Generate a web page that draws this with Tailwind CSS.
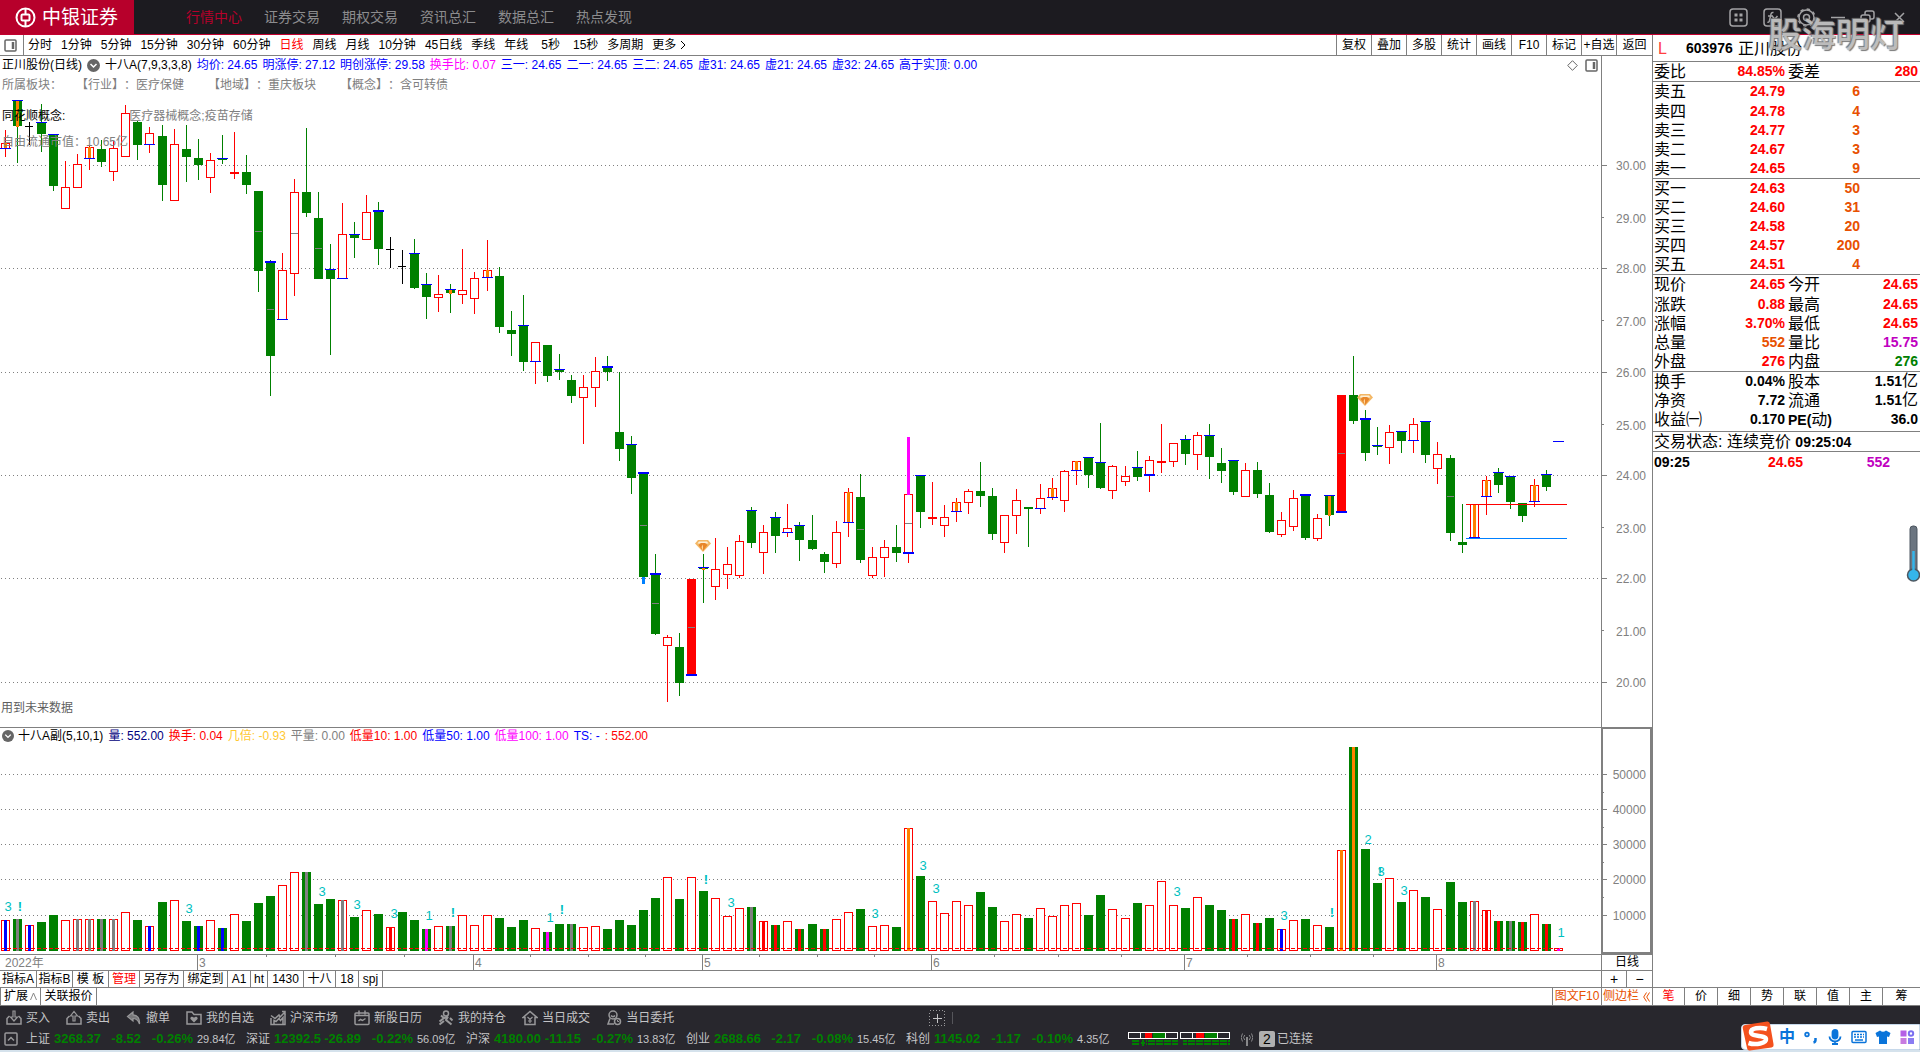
<!DOCTYPE html>
<html lang="zh-CN">
<head>
    <meta charset="UTF-8">
    <meta name="viewport" content="width=device-width, initial-scale=1.0">
    <title>正川股份 603976 - 中银证券</title>
    <script src="https://cdn.jsdelivr.net/npm/@tailwindcss/browser@4"></script>
</head>
<body class="h-screen overflow-hidden flex flex-col bg-white text-black text-xs font-['Liberation_Sans','Noto_Sans_CJK_SC',sans-serif]">
    <!-- Title bar -->
    <header class="relative h-[35px] shrink-0 flex bg-[#1c1b20] border-b border-[#c3002f]">
        <a href="#" class="w-[134px] flex items-center gap-[6px] pl-[15px] bg-[#b7002b] text-white">
            <svg class="w-[21px] h-[21px]" viewBox="0 0 21 21" fill="none" stroke="currentColor">
                <circle cx="10.5" cy="10.5" r="9" stroke-width="2"></circle>
                <rect x="6.5" y="7.5" width="8" height="6" rx="1" stroke-width="2"></rect>
                <path d="M10.5 1v6M10.5 14v6" stroke-width="2"></path>
            </svg>
            <span class="text-[19px] leading-none">中银证券</span>
        </a>
        <nav class="flex items-center gap-[22px] ml-[52px] text-sm text-[#8c8c8e]">
            <a href="#" class="text-[#b7002b]">行情中心</a>
            <a href="#">证券交易</a>
            <a href="#">期权交易</a>
            <a href="#">资讯总汇</a>
            <a href="#">数据总汇</a>
            <a href="#">热点发现</a>
        </nav>
        <div class="ml-auto flex items-center gap-[15px] pr-[11px] text-[#a3a3a5]">
            <button aria-label="应用">
                <svg class="w-[19px] h-[19px]" viewBox="0 0 19 19" fill="none" stroke="currentColor" stroke-width="1.5">
                    <rect x="1" y="1" width="17" height="17" rx="3"></rect>
                    <path d="M5.5 7h3M10.5 7h3M5.5 12h3M10.5 12h3" stroke-width="3"></path>
                </svg>
            </button>
            <button aria-label="公式">
                <svg class="w-[19px] h-[19px]" viewBox="0 0 19 19" fill="none" stroke="currentColor" stroke-width="1.5">
                    <rect x="1" y="1" width="17" height="17" rx="3"></rect>
                    <path d="M10.5 4.5c-2-.5-2.5 1-3 4l-1 4c-.3 1.5-1 2-2 1.5M5 8h5M9.5 8.5l4.5 5M14.5 8l-5 6"></path>
                </svg>
            </button>
            <button aria-label="设置">
                <svg class="w-[19px] h-[19px]" viewBox="0 0 19 19" fill="none" stroke="currentColor" stroke-width="1.5">
                    <circle cx="9.5" cy="9.5" r="7.5"></circle>
                    <circle cx="9.5" cy="9.5" r="8.5" stroke-dasharray="3.3 3.37"></circle>
                    <circle cx="9.5" cy="9.5" r="3"></circle>
                </svg>
            </button>
            <button aria-label="最小化">
                <svg class="w-[14px] h-[19px]" viewBox="0 0 14 19" fill="none" stroke="currentColor" stroke-width="1.5"><path d="M0 9.5h14"></path></svg>
            </button>
            <button aria-label="还原">
                <svg class="w-[15px] h-[19px]" viewBox="0 0 15 19" fill="none" stroke="currentColor" stroke-width="1.5">
                    <rect x="1" y="7" width="9" height="7" rx="2"></rect>
                    <path d="M5 7V5a2 2 0 0 1 2-2h5a2 2 0 0 1 2 2v4a2 2 0 0 1-2 2h-2"></path>
                </svg>
            </button>
            <button aria-label="关闭">
                <svg class="w-[19px] h-[19px]" viewBox="0 0 19 19" fill="none" stroke="currentColor" stroke-width="1.5"><path d="M5 5l9 9M14 5l-9 9"></path></svg>
            </button>
        </div>
        <p class="absolute right-[16px] top-[12px] z-10 text-[34px] leading-[46px] font-medium text-white/50 [text-shadow:1px_1px_1px_#777,-1px_-1px_1px_#777] pointer-events-none">股海明灯</p>
    </header>

    <main class="flex-1 min-h-0 flex">
        <section class="flex-1 min-w-0 flex flex-col">
            <!-- Period toolbar -->
            <div class="h-[21px] shrink-0 flex items-stretch border-b border-[#808080]">
                <button aria-label="侧栏" class="w-6 pl-1 flex items-center border-r border-[#808080]">
                    <svg class="w-[13px] h-[13px]" viewBox="0 0 13 13" fill="none" stroke="#666"><rect x="1" y="1" width="11" height="11" rx="1" stroke-width="1.5"></rect><path d="M9 3v7" stroke-width="2.5"></path></svg>
                </button>
                <div class="flex items-center gap-[9px] pl-1 whitespace-nowrap">
                    <button>分时</button>
                    <button>1分钟</button>
                    <button>5分钟</button>
                    <button>15分钟</button>
                    <button>30分钟</button>
                    <button>60分钟</button>
                    <button class="text-[#ff0000]">日线</button>
                    <button>周线</button>
                    <button>月线</button>
                    <button>10分钟</button>
                    <button>45日线</button>
                    <button>季线</button>
                    <button>年线</button>
                    <button class="px-1">5秒</button>
                    <button>15秒</button>
                    <button>多周期</button>
                    <button class="flex items-center gap-1">更多
                        <svg class="w-[6px] h-[10px]" viewBox="0 0 6 10" fill="none" stroke="currentColor"><path d="M1 1l4 4-4 4"></path></svg>
                    </button>
                </div>
                <div class="ml-auto flex whitespace-nowrap">
                    <button class="w-[35px] border-l border-[#808080]">复权</button>
                    <button class="w-[35px] border-l border-[#808080]">叠加</button>
                    <button class="w-[35px] border-l border-[#808080]">多股</button>
                    <button class="w-[35px] border-l border-[#808080]">统计</button>
                    <button class="w-[35px] border-l border-[#808080]">画线</button>
                    <button class="w-[35px] border-l border-[#808080]">F10</button>
                    <button class="w-[35px] border-l border-[#808080]">标记</button>
                    <button class="w-[35px] border-l border-[#808080]">+自选</button>
                    <button class="w-9 border-l border-[#808080]">返回</button>
                </div>
            </div>

            <!-- Price chart -->
            <div class="flex-1 min-h-0 flex">
                <div class="relative flex-1 min-w-0 overflow-hidden [text-spacing-trim:space-all]">
                    <svg id="priceChart" class="absolute inset-0 w-full h-full" shape-rendering="crispEdges"></svg>
                    <div class="absolute left-[2px] right-0 top-0 h-[18px] flex items-center gap-[5px] whitespace-nowrap text-[#0000ff]">
                        <span class="text-black">正川股份(日线)</span>
                        <svg class="w-[13px] h-[13px]" viewBox="0 0 13 13"><circle cx="6.5" cy="6.5" r="6.5" fill="#666"></circle><path d="M3.5 5l3 3 3-3" fill="none" stroke="#fff" stroke-width="1.5"></path></svg>
                        <span class="text-black">十八A(7,9,3,3,8)</span>
                        <span>均价: 24.65</span>
                        <span>明涨停: 27.12</span>
                        <span>明创涨停: 29.58</span>
                        <span class="text-[#ff00ff]">换手比: 0.07</span>
                        <span>三一: 24.65</span>
                        <span>二一: 24.65</span>
                        <span>三二: 24.65</span>
                        <span>虚31: 24.65</span>
                        <span>虚21: 24.65</span>
                        <span>虚32: 24.65</span>
                        <span>高于实顶: 0.00</span>
                        <svg class="w-[11px] h-[11px] ml-auto" viewBox="0 0 11 11" fill="none" stroke="#666"><path d="M5.5 .7l4.8 4.8-4.8 4.8L.7 5.5z"></path></svg>
                        <svg class="w-[13px] h-[13px] ml-[2px] mr-[3px]" viewBox="0 0 13 13" fill="none" stroke="#666"><rect x="1" y="1" width="11" height="11" rx="1" stroke-width="1.5"></rect><path d="M9 3v7" stroke-width="2.5"></path></svg>
                    </div>
                    <div class="absolute left-[2px] top-[20px] h-[18px] flex items-center gap-6 whitespace-nowrap text-[#808080]">
                        <span class="-mr-[10px]">所属板块：</span>
                        <span>【行业】：医疗保健</span>
                        <span>【地域】：重庆板块</span>
                        <span>【概念】：含可转债</span>
                    </div>
                    <div class="absolute left-[2px] top-[51px] h-[18px] flex items-center gap-16 whitespace-nowrap">
                        <span>同花顺概念:</span>
                        <span class="text-[#808080]">医疗器械概念;疫苗存储</span>
                    </div>
                    <p class="absolute left-[2px] top-[77px] leading-[18px] text-[#808080]">自由流通市值：10.65亿</p>
                    <p class="absolute left-px bottom-[10px] leading-[18px] text-[#606060]">用到未来数据</p>
                </div>
                <svg id="priceAxis" class="w-[51px] h-full shrink-0 border-l border-[#808080]" shape-rendering="crispEdges"></svg>
            </div>

            <!-- Volume chart -->
            <div class="h-[227px] shrink-0 flex">
                <div class="relative flex-1 min-w-0 overflow-hidden border-t border-[#808080]">
                    <svg id="volumeChart" class="absolute inset-0 w-full h-full" shape-rendering="crispEdges"></svg>
                    <div class="absolute left-[2px] top-0 h-[16px] flex items-center gap-[5px] whitespace-nowrap">
                        <svg class="w-3 h-3 -mr-px" viewBox="0 0 13 13"><circle cx="6.5" cy="6.5" r="6.5" fill="#666"></circle><path d="M3.5 5l3 3 3-3" fill="none" stroke="#fff" stroke-width="1.5"></path></svg>
                        <span>十八A副(5,10,1)</span>
                        <span class="text-[#000080]">量: 552.00</span>
                        <span class="text-[#ff0000]">换手: 0.04</span>
                        <span class="text-[#ffc832]">几倍: -0.93</span>
                        <span class="text-[#808080]">平量: 0.00</span>
                        <span class="text-[#ff0000]">低量10: 1.00</span>
                        <span class="text-[#0000ff]">低量50: 1.00</span>
                        <span class="text-[#ff00ff]">低量100: 1.00</span>
                        <span class="text-[#0000ff]">TS: -</span>
                        <span class="text-[#ff0000]">: 552.00</span>
                    </div>
                </div>
                <svg id="volumeAxis" class="w-[51px] h-full shrink-0 border-2 border-[#808080]" shape-rendering="crispEdges"></svg>
            </div>

            <!-- Date axis -->
            <div class="h-4 shrink-0 flex border-t border-[#808080]">
                <svg id="dateAxis" class="flex-1 min-w-0 h-full" shape-rendering="crispEdges"></svg>
                <button class="w-[51px] leading-[15px] border-l border-[#808080]">日线</button>
            </div>

            <div class="h-[17px] shrink-0 flex border-t border-[#808080] leading-4 whitespace-nowrap">
                <button class="w-[37px] border-r border-[#808080]">指标A</button>
                <button class="w-9 border-r border-[#808080]">指标B</button>
                <button class="w-9 border-r border-[#808080]">模 板</button>
                <button class="w-[31px] border-r border-[#808080] text-[#ff0000]">管理</button>
                <button class="w-11 border-r border-[#808080]">另存为</button>
                <button class="w-11 border-r border-[#808080]">绑定到</button>
                <button class="w-[23px] border-r border-[#808080]">A1</button>
                <button class="w-[17px] border-r border-[#808080]">ht</button>
                <button class="w-9 border-r border-[#808080]">1430</button>
                <button class="w-8 border-r border-[#808080]">十八</button>
                <button class="w-[23px] border-r border-[#808080]">18</button>
                <button class="w-6 border-r border-[#808080]">spj</button>
                <button class="w-[26px] ml-auto border-x border-[#808080] text-sm leading-4">+</button>
                <button class="w-[25px] text-sm leading-4">−</button>
            </div>
            <div class="h-[18px] shrink-0 flex border-t border-[#808080] leading-[17px] whitespace-nowrap">
                <button class="w-[41px] flex items-center justify-center gap-[2px] border-x border-[#808080]">扩展
                    <svg class="w-[7px] h-[9px]" viewBox="0 0 7 9" fill="none" stroke="#888"><path d="M.5 8l3-7 3 7"></path></svg>
                </button>
                <button class="w-14 border-r border-[#808080]">关联报价</button>
                <button class="w-[49px] ml-auto border-l border-[#808080] text-[#e85000]">图文F10</button>
                <button class="w-[51px] flex items-center gap-1 pl-px border-l border-[#808080] text-[#e85000]">侧边栏
                    <svg class="w-[7px] h-[10px]" viewBox="0 0 7 10" fill="none" stroke="currentColor"><path d="M3.5 .5L.7 5l2.8 4.5M6.5 .5L3.7 5l2.8 4.5"></path></svg>
                </button>
            </div>
        </section>

        <!-- Quote panel -->
        <aside class="relative w-[268px] shrink-0 flex flex-col border-l border-[#808080] text-base leading-[19px] whitespace-nowrap">
            <div class="h-[27px] shrink-0 flex items-center border-b border-[#808080]">
                <span class="w-[33px] pl-[5px] text-[#ff4040]">L</span>
                <b class="w-[52px] text-sm">603976</b>
                <span>正川股份</span>
            </div>
            <table class="w-full table-fixed">
                <tbody class="border-b border-[#808080]">
                    <tr class="h-[19px]">
                        <th scope="row" class="w-[50px] pl-px text-left font-normal">委比</th>
                        <td class="w-[82px] text-right text-sm leading-[19px] font-bold text-[#ff0000]">84.85%</td>
                        <th scope="row" class="w-[75px] pl-[3px] text-left font-normal">委差</th>
                        <td class="pr-[2px] text-right text-sm leading-[19px] font-bold text-[#ff0000]">280</td>
                    </tr>
                </tbody>
                <tbody id="asks" class="border-b border-[#808080]"></tbody>
                <tbody id="bids" class="border-b border-[#808080]"></tbody>
                <tbody id="quote" class="border-b border-[#808080]"></tbody>
                <tbody id="basics"></tbody>
            </table>
            <p class="h-[21px] shrink-0 mt-[2px] pl-px border-y border-[#808080]">交易状态: 连续竞价 <b class="text-sm leading-[19px]">09:25:04</b></p>
            <table class="w-full table-fixed text-sm leading-5 font-bold">
                <tbody>
                    <tr>
                        <td class="w-[50px] pl-px">09:25</td>
                        <td class="w-[100px] text-right text-[#ff0000]">24.65</td>
                        <td class="w-[87px] text-right text-[#c000c0]">552</td>
                        <td></td>
                    </tr>
                </tbody>
            </table>
            <svg class="absolute right-0 top-[490px] w-[14px] h-[58px]" viewBox="0 0 14 58">
                <rect x="4" y="1" width="7" height="50" rx="3" fill="#6b7580" stroke="#4c5660"></rect>
                <circle cx="7.5" cy="50" r="6" fill="#35b5ea" stroke="#4c5660" stroke-width="1.5"></circle>
                <path d="M7.5 26v22" stroke="#35b5ea" stroke-width="2.5"></path>
            </svg>
            <div class="mt-auto h-[18px] shrink-0 flex border-t border-[#808080] text-xs leading-[17px]">
                <button class="w-8 border-r border-[#808080] text-[#ff0000]">笔</button>
                <button class="w-[33px] border-r border-[#808080]">价</button>
                <button class="w-[33px] border-r border-[#808080]">细</button>
                <button class="w-[33px] border-r border-[#808080]">势</button>
                <button class="w-[33px] border-r border-[#808080]">联</button>
                <button class="w-[33px] border-r border-[#808080]">值</button>
                <button class="w-[33px] border-r border-[#808080]">主</button>
                <button class="flex-1">筹</button>
            </div>
        </aside>
    </main>

    <!-- Status bar -->
    <footer class="relative h-[47px] shrink-0 bg-[#28272d] border-t border-t-[#808080] border-b-2 border-b-[#d5e2ec] whitespace-nowrap text-[#c4c4c6]">
        <div class="h-[23px] flex items-center gap-4 pl-[6px]">
            <button class="flex items-center gap-1">
                <svg class="w-4 h-4" viewBox="0 0 16 16" fill="none" stroke="#98989a" stroke-width="1.5"><path d="M3.5 6L1 8.5V14h14V8.5L12.5 6"></path><path d="M7 1h2v6h2.5L8 11 4.5 7H7z" stroke-width="1.2"></path></svg>买入
            </button>
            <button class="flex items-center gap-1">
                <svg class="w-4 h-4" viewBox="0 0 16 16" fill="none" stroke="#98989a" stroke-width="1.5"><path d="M3.5 6L1 8.5V14h14V8.5L12.5 6"></path><path d="M7 11V6H4.5L8 1.5 11.5 6H9v5z" stroke-width="1.2"></path></svg>卖出
            </button>
            <button class="flex items-center gap-1">
                <svg class="w-4 h-4" viewBox="0 0 16 16" fill="#77777a" stroke="#98989a" stroke-width="1.2"><path d="M7 2L1.5 6.5 7 11V8.5c3 0 5 1.500 6.500 5.500C14 8.500 11.500 5 7 4.800z"></path></svg>撤单
            </button>
            <button class="flex items-center gap-1">
                <svg class="w-4 h-4" viewBox="0 0 16 16" fill="none" stroke="#98989a" stroke-width="1.5"><path d="M1 14V2h5l2 2.5h7V14z"></path><path d="M8 12.500L4.500 9c-.8-2 1.800-3.500 3.500-1.200 1.700-2.300 4.300-.8 3.500 1.200z" fill="#98989a" stroke="none"></path></svg>我的自选
            </button>
            <button class="flex items-center gap-1">
                <svg class="w-4 h-4" viewBox="0 0 16 16" fill="none" stroke="#98989a" stroke-width="1.5"><path d="M1 8v6.5h14V4"></path><path d="M1 5.500l4 3L9 5l1 2 5-5M12 1.500h3v3M4 14V10.500l2 1 3-3 1.500 2L13 7.500V14"></path></svg>沪深市场
            </button>
            <button class="flex items-center gap-1">
                <svg class="w-4 h-4" viewBox="0 0 16 16" fill="none" stroke="#98989a" stroke-width="1.5"><rect x="1" y="3" width="14" height="11.5" rx="1"></rect><path d="M5 .5v4M11 .5v4M1 5.500h14M4.500 11l2-1.500 2 1 3-2"></path></svg>新股日历
            </button>
            <button class="flex items-center gap-1">
                <svg class="w-4 h-4" viewBox="0 0 16 16" fill="none" stroke="#98989a" stroke-width="2"><circle cx="8" cy="3.5" r="2.5" stroke-width="1.5"></circle><path d="M3 5.500L6 8l4-1.500M6 8l-4.500 3.500M10 6.500L8 10l5.500 4.500M1.500 14.500L6 11M12 8l2.500 2.500"></path></svg>我的持仓
            </button>
            <button class="flex items-center gap-1">
                <svg class="w-4 h-4" viewBox="0 0 16 16" fill="none" stroke="#98989a" stroke-width="1.5"><path d="M1 7.500L8 1.500l7 6H13V14.500H3V7.500z"></path><path d="M5.500 7L8 9.500 10.500 7M8 9.500V13M6 11h4" stroke-width="1.2"></path></svg>当日成交
            </button>
            <button class="flex items-center gap-1">
                <svg class="w-4 h-4" viewBox="0 0 16 16" fill="none" stroke="#98989a" stroke-width="1.5"><circle cx="7" cy="5" r="4"></circle><path d="M5 5.500c1 1.500 3 1.500 4 0M4 8.500L2 14h6"></path><circle cx="11.5" cy="11.5" r="3"></circle><path d="M11.500 10v1.500h1.500" stroke-width="1"></path></svg>当日委托
            </button>
            <button aria-label="添加" class="ml-[239px]">
                <svg class="w-[26px] h-4" viewBox="0 0 26 16" fill="none" stroke="#98989a" shape-rendering="crispEdges"><rect x=".5" y=".5" width="15" height="15" stroke-dasharray="1 2"></rect><path d="M8.500 4v9M4 8.500h9" stroke="#c4c4c6"></path><path d="M23.500 2v12" stroke="#55555a"></path></svg>
            </button>
        </div>
        <div class="h-[19px] flex items-center pl-1">
            <button aria-label="展开" class="w-[22px]">
                <svg class="w-[14px] h-[14px]" viewBox="0 0 14 14" fill="none" stroke="#98989a" stroke-width="1.5"><rect x="1" y="1" width="12" height="12" rx="1"></rect><path d="M4 8.500l3-3 3 3"></path></svg>
            </button>
            <div id="indices" class="flex"></div>
            <svg class="w-[103px] h-[14px] ml-[2px]" viewBox="0 0 103 14" shape-rendering="crispEdges">
                <path d="M.5.5h49v6H.5zM12.500.5v6M37.500.5v6M52.500.5h49v6h-49zM64.500.5v6M89.500.5v6" fill="none" stroke="#fff"></path>
                <path d="M17 1h7v5h-7zM68 1h8v5h-8z" fill="#ff0000"></path>
                <path d="M25 1h12v5H25zM77 1h12v5H77z" fill="#008000"></path>
                <path d="M4 9h98M4 12h98" stroke="#008000" stroke-width="2" stroke-dasharray="7 1"></path>
                <path d="M11 7h7v7h-7zM50 7h5v7h-5z" fill="#28272d"></path>
                <path d="M14.500 8v6M12.500 11h4" stroke="#008000" stroke-width="2"></path>
            </svg>
            <svg class="w-3 h-4 ml-[10px]" viewBox="0 0 12 16" fill="none" stroke="#88888a"><path d="M6 6v9" stroke-width="2"></path><path d="M3.800 4a3.500 3.500 0 0 0 0 5M8.200 4a3.500 3.500 0 0 1 0 5M1.500 2.500a7 7 0 0 0 0 8M10.500 2.500a7 7 0 0 1 0 8"></path></svg>
            <span class="w-4 h-4 ml-[6px] rounded-xs bg-[#b0b0b0] text-black text-sm leading-4 text-center">2</span>
            <span class="ml-[2px]">已连接</span>
        </div>
        <!-- Input method bar -->
        <div class="absolute right-0 bottom-0 h-[26px] flex items-center gap-[8px] pl-[38px] pr-1 rounded-l bg-white border border-[#c6d8ea] text-[#0a74da]">
            <svg class="absolute left-0 -top-[4px] w-8 h-[30px]" viewBox="0 0 32 30">
                <path d="M3 4L25 .5Q27.500 0 28 3l3.500 20q.5 3-2 3.500L8 29.500Q5.500 30 5 27L.8 7.500Q.3 4.500 3 4z" fill="#f4511e"></path>
                <path d="M25 8C18 6 8.500 7 9 11.500S23.500 14 24 18 14 24.500 6.500 22" fill="none" stroke="#fff" stroke-width="4.500"></path>
            </svg>
            <b class="-ml-px w-4 text-base leading-none">中</b>
            <svg class="w-4 h-4" viewBox="0 0 16 16" fill="none" stroke="currentColor"><circle cx="4" cy="5.500" r="1.800" stroke-width="1.800"></circle><path d="M12.500 9v2q0 2-2 2.500" stroke-width="2.500"></path></svg>
            <svg class="w-4 h-4" viewBox="0 0 16 16" fill="none" stroke="currentColor" stroke-width="1.800"><rect x="5.500" y="1" width="5" height="8.500" rx="2.500" fill="currentColor"></rect><path d="M2.500 7.500a5.500 5 0 0 0 11 0M8 12.500V15M5 15h6"></path></svg>
            <svg class="w-4 h-4" viewBox="0 0 16 16" fill="none" stroke="currentColor" stroke-width="1.500"><rect x="1" y="2.500" width="14" height="11" rx="1"></rect><path d="M3 5.500h10M3 8h10" stroke-dasharray="2 1"></path><path d="M4 11h8"></path></svg>
            <svg class="w-4 h-4" viewBox="0 0 16 16" fill="currentColor"><path d="M5 1.500q3 2.500 6 0l4.500 2.500-1.500 4-2-.5V15H4V7.500L2 8 .5 4z"></path></svg>
            <svg class="w-4 h-4" viewBox="0 0 16 16" fill="none" stroke-width="2"><rect x="2.500" y="2.500" width="4" height="4" fill="#b55fe6" stroke="#b55fe6"></rect><circle cx="12" cy="4.500" r="2.200" stroke="#7a6ff0"></circle><rect x="2.500" y="10" width="4" height="4" fill="#c77be0" stroke="#c77be0"></rect><rect x="10" y="10" width="4" height="4" fill="#8a7cf2" stroke="#8a7cf2"></rect></svg>
        </div>
    </footer>

    <script>
        // [kind, high, top, bottom, low, marks, mid]
        // kind: r hollow, R solid, g falling, k cross; marks: t/T top line, b/B bottom line, o core
        const candles = [
            ['r',130,143,149,157,'bo'], ['g',100,100,126,163,'to'], ['k',122,126,127,145], ['g',104,122,134,152,'t'],
            ['g',134,134,186,191,'t'], ['r',161,187,209,209], ['r',154,164,188,188], ['r',145,147,159,170,'bo'],
            ['g',140,149,162,167], ['r',141,148,172,181], ['r',105,113,157,157], ['g',121,122,145,160],
            ['r',127,133,145,153,'b'], ['g',125,136,185,201], ['r',129,144,201,201], ['g',125,149,157,182],
            ['g',139,158,165,180], ['r',153,160,178,193], ['g',135,158,160,164,'t'], ['r',132,172,174,179],
            ['g',155,172,185,194], ['g',191,191,271,292,'',231], ['g',260,261,356,396,'T',309], ['r',253,270,320,320,'b'],
            ['r',179,192,274,296,'',233], ['g',128,192,213,217], ['g',192,218,279,279,'',248], ['g',244,269,279,355,'t'],
            ['r',203,234,279,279,'b'], ['g',222,234,238,258,'t'], ['r',195,212,240,240], ['g',202,210,249,265,'T'],
            ['k',237,249,250,268], ['k',250,266,267,284], ['g',239,253,288,289,'t'], ['g',273,284,297,319,'t'],
            ['r',275,294,298,312], ['g',284,289,293,313,'to'], ['r',249,290,295,304], ['r',272,278,299,314],
            ['r',240,270,278,291,'bo'], ['g',267,276,327,333], ['g',311,330,334,356], ['g',295,325,362,371,'t'],
            ['r',342,342,362,384,'b'], ['g',345,345,376,382], ['g',354,369,372,380,'t'], ['g',375,380,396,403],
            ['r',375,387,398,444], ['r',357,371,388,407], ['g',356,366,372,381,'T'], ['g',372,432,449,461],
            ['g',436,444,478,494,'t'], ['g',472,472,577,577,'T',525], ['g',554,573,634,635,'T',603], ['r',635,637,646,702],
            ['g',633,647,683,696], ['R',579,579,676,676,'B',627], ['g',554,567,569,603,'to'], ['r',538,569,587,600],
            ['r',547,564,575,589], ['r',535,541,576,578], ['g',507,510,543,548,'t'], ['r',525,532,553,574],
            ['g',512,517,536,553,'t'], ['r',504,528,533,537,'b'], ['g',522,525,540,561,'t'], ['g',515,540,549,550],
            ['g',552,554,562,573], ['r',521,532,564,568], ['r',488,492,523,537,'bo'], ['g',474,497,560,563,'',529],
            ['r',547,557,576,578], ['r',540,547,558,577], ['g',525,547,553,562], ['r',494,494,554,563,'B',523],
            ['g',475,475,512,528,'t'], ['r',482,517,519,525], ['r',505,517,526,537], ['r',498,502,512,522,'bo'],
            ['r',489,491,503,514], ['g',462,491,496,507], ['g',488,496,534,540], ['r',515,515,543,553],
            ['r',489,500,516,534], ['g',507,507,509,547], ['r',484,498,509,514,'b'], ['r',478,488,498,500,'bo'],
            ['r',470,471,501,512], ['r',461,461,471,485,'bo'], ['g',457,457,475,488,'t'], ['g',423,462,488,489,'t'],
            ['r',465,466,491,499], ['r',466,476,482,486], ['g',451,467,477,481,'t'], ['r',456,460,476,492,'B'],
            ['r',424,461,463,473], ['r',443,443,462,467], ['g',435,439,454,465,'t'], ['r',432,435,455,470],
            ['g',424,435,457,479,'t'], ['g',448,463,471,483], ['g',460,460,492,495,'t'], ['r',463,470,497,497],
            ['g',462,470,494,498], ['g',483,495,532,533], ['r',512,520,535,537], ['r',490,498,527,531],
            ['g',494,494,538,540,'T'], ['r',514,518,539,541], ['g',495,495,515,526,'to'], ['R',395,395,513,513,'B',453],
            ['g',356,395,421,424], ['g',410,418,453,461,'T'], ['g',427,445,447,455,'t'], ['r',425,432,448,464],
            ['g',431,431,441,453,'t'], ['r',418,424,441,453,'b'], ['g',421,421,455,463,'t'], ['r',442,454,469,484],
            ['g',455,458,533,541,'',496], ['g',504,542,545,553], ['r',504,504,538,538,'bo'], ['r',476,480,497,515,'bo'],
            ['g',468,472,485,493,'t'], ['g',476,476,502,509,'t'], ['g',503,503,516,522], ['r',479,485,502,507,'bo'],
            ['g',470,474,487,491,'t']
        ];

        // kind + top of bar + core colour (b blue, y gray, r red, m magenta, o orange)
        const volumes = (
            'r920b g919y r925b g922 g915 r920 r919y r919y g919y r919y r912 g920 r926b g902 r900 g921 g926b r920 g928b r914 ' +
            'g921 g903 g896 r885 r872 g872y g904 g899 r900y g917 r910 g914 r927r g912 g920 g929m r926 g926y r915 r925 ' +
            'r915 g918 g927 g920 r928 g932m g924 g924y r927 r926 g929 g920 g925 g910 g898 r877 g899 r877 g891 r898 ' +
            'r916 r908 g907y r921r g925r r921 g929r g924 g929r r919 r912 g909 r926 r925 g927 r828o g876 r901 r913 r901 ' +
            'r905 g892 g907 r921 r914 g918 r908 r916 r905 r903 g915 g895 r909 r918 g903 r905 r881 r905 g908 r897 ' +
            'g905 g910 g919r r914 g923r g918 r929b r920 g919 r925 g927 r850o g747o g849 g883 r878 g902 r890 g897 r909 ' +
            'g882 g902 r901y r910r g921r g921y g922r r914 g924r r948m'
        ).split(' ');

        const volumeTags = [
            ['3',8,907], ['!',20,907], ['3',189,909], ['3',322,892], ['3',357,905], ['3',394,914], ['1',429,916],
            ['!',453,913], ['1',550,918], ['!',562,910], ['!',706,880], ['3',731,903], ['3',875,914], ['3',923,866],
            ['3',936,889], ['3',1177,892], ['3',1284,916], ['!',1332,913], ['2',1368,840], ['3',1381,872],
            ['!',1380,872], ['3',1404,891], ['1',1561,933]
        ];

        const RED = '#ff0000', GREEN = '#008000', GRAY = '#808080', BLUE = '#0000ff', ORANGE = '#ff8000';
        const CORE = { b: BLUE, y: GRAY, r: RED, m: '#ff00ff', o: ORANGE };
        const PRICE_TOP = 56, VOLUME_TOP = 728, VOLUME_BASE = 951;

        const barX = i => Math.round(5.02 + i * 12.0375);
        const rect = (x, y, w, h, fill) => `<rect x="${x}" y="${y}" width="${w}" height="${h}" fill="${fill}"/>`;
        const box = (x, y, w, h) => rect(x, y, w, h, RED) + (h > 2 ? rect(x + 1, y + 1, w - 2, h - 2, '#fff') : '');
        const grid = y => `<line x1="1" x2="100%" y1="${y + 0.5}" y2="${y + 0.5}" stroke="${GRAY}" stroke-dasharray="1 3"/>`;
        const text = (s, x, y, fill, size, anchor, weight = 400) =>
            `<text x="${x}" y="${y}" fill="${fill}" font-size="${size}" font-weight="${weight}" text-anchor="${anchor}">${s}</text>`;
        const shift = (top, body) => `<g transform="translate(0 ${-top})">${body}</g>`;

        function candle([kind, high, top, bottom, low, marks = '', mid], i) {
            const x = barX(i);
            const color = kind === 'g' ? GREEN : kind === 'k' ? '#000' : RED;
            let s = rect(x, high, 1, low - high, color);
            s += kind === 'r' ? box(x - 4, top, 9, bottom - top) : rect(x - 4, top, kind === 'k' ? 8 : 9, bottom - top, color);
            if (marks.includes('o')) s += rect(x - 1, kind === 'g' ? top + 1 : top, 3, bottom - top, ORANGE);
            if (mid) s += rect(x - 3, mid, 7, 1, GRAY);
            if (marks.includes('t')) s += rect(x - 5, top, 11, 1, BLUE);
            if (marks.includes('T')) s += rect(x - 5, top, 11, 2, BLUE);
            if (marks.includes('b')) s += rect(x - 5, bottom - 1, 11, 1, BLUE);
            if (marks.includes('B')) s += rect(x - 5, bottom - 2, 11, 2, BLUE);
            return s;
        }

        const gem = (x, y) => `<g transform="translate(${x} ${y})" shape-rendering="auto">
            <path d="M3 0h10l3 3.500L8 12 0 3.500z" fill="#f3b765"/>
            <path d="M4 1.500h8l1.500 2h-11z" fill="#fdf0d8"/>
            <path d="M3.500 5L6 3h4l2.500 2L8 11z" fill="#e8862a"/>
            <path d="M8 4.500L6.500 7 8 11z" fill="#ffd79a"/></g>`;

        let price = [165, 268, 372, 475, 578, 682].map(grid).join('');
        price += candles.map(candle).join('');
        price += rect(barX(53) - 1, 577, 3, 7, '#0080ff');
        price += rect(barX(75) - 1, 437, 3, 58, '#ff00ff');
        price += rect(1466, 504, 101, 1, RED) + rect(1466, 538, 101, 1, '#0080ff') + rect(1553, 441, 11, 1, BLUE);
        price += gem(695, 540) + gem(1357, 394);
        document.getElementById('priceChart').innerHTML = shift(PRICE_TOP, price);

        const priceTicks = [165, 217, 268, 320, 372, 424, 475, 527, 578, 630, 682];
        document.getElementById('priceAxis').innerHTML = shift(PRICE_TOP, priceTicks.map((y, i) =>
            rect(0, y, i % 2 ? 2 : 5, 1, GRAY) + text((30 - i) + '.00', 44, y + 5 + i % 2, GRAY, 12, 'end')).join(''));

        let volume = [774, 809, 844, 879, 915].map(grid).join('');
        volume += volumes.map((v, i) => {
            const x = barX(i), top = +v.slice(1, 4), h = VOLUME_BASE - top;
            return (v[0] === 'r' ? box(x - 4, top, 9, h) : rect(x - 4, top, 9, h, GREEN)) +
                (v[4] ? rect(x - 1, top, 3, h, CORE[v[4]]) : '');
        }).join('');
        volume += `<line x1="1" x2="1563" y1="948.5" y2="948.5" stroke="${RED}" stroke-dasharray="4 2"/>`;
        volume += volumeTags.map(([s, x, y]) => text(s, x, y + 4, '#00bfbf', 13, 'middle', s === '!' ? 700 : 400)).join('');
        document.getElementById('volumeChart').innerHTML = shift(VOLUME_TOP, volume);

        document.getElementById('volumeAxis').innerHTML = shift(VOLUME_TOP + 1, [774, 809, 844, 879, 915].map((y, i) =>
            rect(0, y, 4, 1, GRAY) + (i < 4 ? rect(0, y + 18, 1, 1, GRAY) : '') + text((5 - i) * 10000, 43, y + 5, GRAY, 12, 'end')).join(''));

        const months = [[197, 3], [473, 4], [702, 5], [931, 6], [1184, 7], [1436, 8]];
        const weeks = [266, 335, 404, 530, 588, 645, 759, 817, 874, 994, 1058, 1121, 1247, 1310, 1373];
        document.getElementById('dateAxis').innerHTML = text('2022年', 5, 12, GRAY, 12, 'start') +
            months.map(([x, m]) => rect(x, 0, 1, 15, GRAY) + text(m, x + 2, 12, GRAY, 12, 'start')).join('') +
            weeks.map(x => rect(x, 0, 1, 2, GRAY)).join('');

        // Order book and quote tables
        const book = rows => rows.map(([name, p, n]) => `<tr class="h-[19px] first:h-5">
            <th scope="row" class="pl-px text-left font-normal">${name}</th>
            <td class="text-right text-sm leading-[19px] font-bold text-[#ff0000]">${p}</td>
            <td class="text-right text-sm leading-[19px] font-bold text-[#e85000]">${n}</td><td></td></tr>`).join('');
        const pairs = rows => rows.map(([a, av, ac, b, bv, bc]) => `<tr class="h-[19px] first:h-5">
            <th scope="row" class="pl-px text-left font-normal">${a}</th>
            <td class="text-right text-sm leading-[19px] font-bold ${ac}">${av}</td>
            <th scope="row" class="pl-[3px] text-left font-normal">${b}</th>
            <td class="pr-[2px] text-right text-sm leading-[19px] font-bold ${bc}">${bv}</td></tr>`).join('');
        const red = 'text-[#ff0000]', black = 'text-black';

        document.getElementById('asks').innerHTML = book([
            ['卖五', '24.79', 6], ['卖四', '24.78', 4], ['卖三', '24.77', 3], ['卖二', '24.67', 3], ['卖一', '24.65', 9]]);
        document.getElementById('bids').innerHTML = book([
            ['买一', '24.63', 50], ['买二', '24.60', 31], ['买三', '24.58', 20], ['买四', '24.57', 200], ['买五', '24.51', 4]]);
        document.getElementById('quote').innerHTML = pairs([
            ['现价', '24.65', red, '今开', '24.65', red],
            ['涨跌', '0.88', red, '最高', '24.65', red],
            ['涨幅', '3.70%', red, '最低', '24.65', red],
            ['总量', '552', 'text-[#e85000]', '量比', '15.75', 'text-[#c000c0]'],
            ['外盘', '276', red, '内盘', '276', 'text-[#008000]']]);
        const yi = '1.51<span class="text-base leading-none font-normal">亿</span>';
        document.getElementById('basics').innerHTML = pairs([
            ['换手', '0.04%', black, '股本', yi, black],
            ['净资', '7.72', black, '流通', yi, black],
            ['收益㈠', '0.170', black, '<b class="text-sm leading-none">PE(</b>动<b class="text-sm leading-none">)</b>', '36.0', black]]);

        document.getElementById('indices').innerHTML = [
            ['上证', '3268.37', '-8.52', '-0.26%', '29.84亿'],
            ['深证', '12392.5', '-26.89', '-0.22%', '56.09亿'],
            ['沪深', '4180.00', '-11.15', '-0.27%', '13.83亿'],
            ['创业', '2688.66', '-2.17', '-0.08%', '15.45亿'],
            ['科创', '1145.02', '-1.17', '-0.10%', '4.35亿']
        ].map(([name, last, change, pct, amount]) => `<div class="flex items-center">
            <span class="w-7">${name}</span>
            <b class="w-[46px] text-[13px] leading-4 text-[#008000]">${last}</b>
            <b class="w-[41px] text-right text-[13px] leading-4 text-[#008000]">${change}</b>
            <b class="w-[52px] text-right text-[13px] leading-4 text-[#008000]">${pct}</b>
            <span class="w-[49px] ml-1 text-[11px] leading-4">${amount}</span></div>`).join('');
    </script>
</body>
</html>
